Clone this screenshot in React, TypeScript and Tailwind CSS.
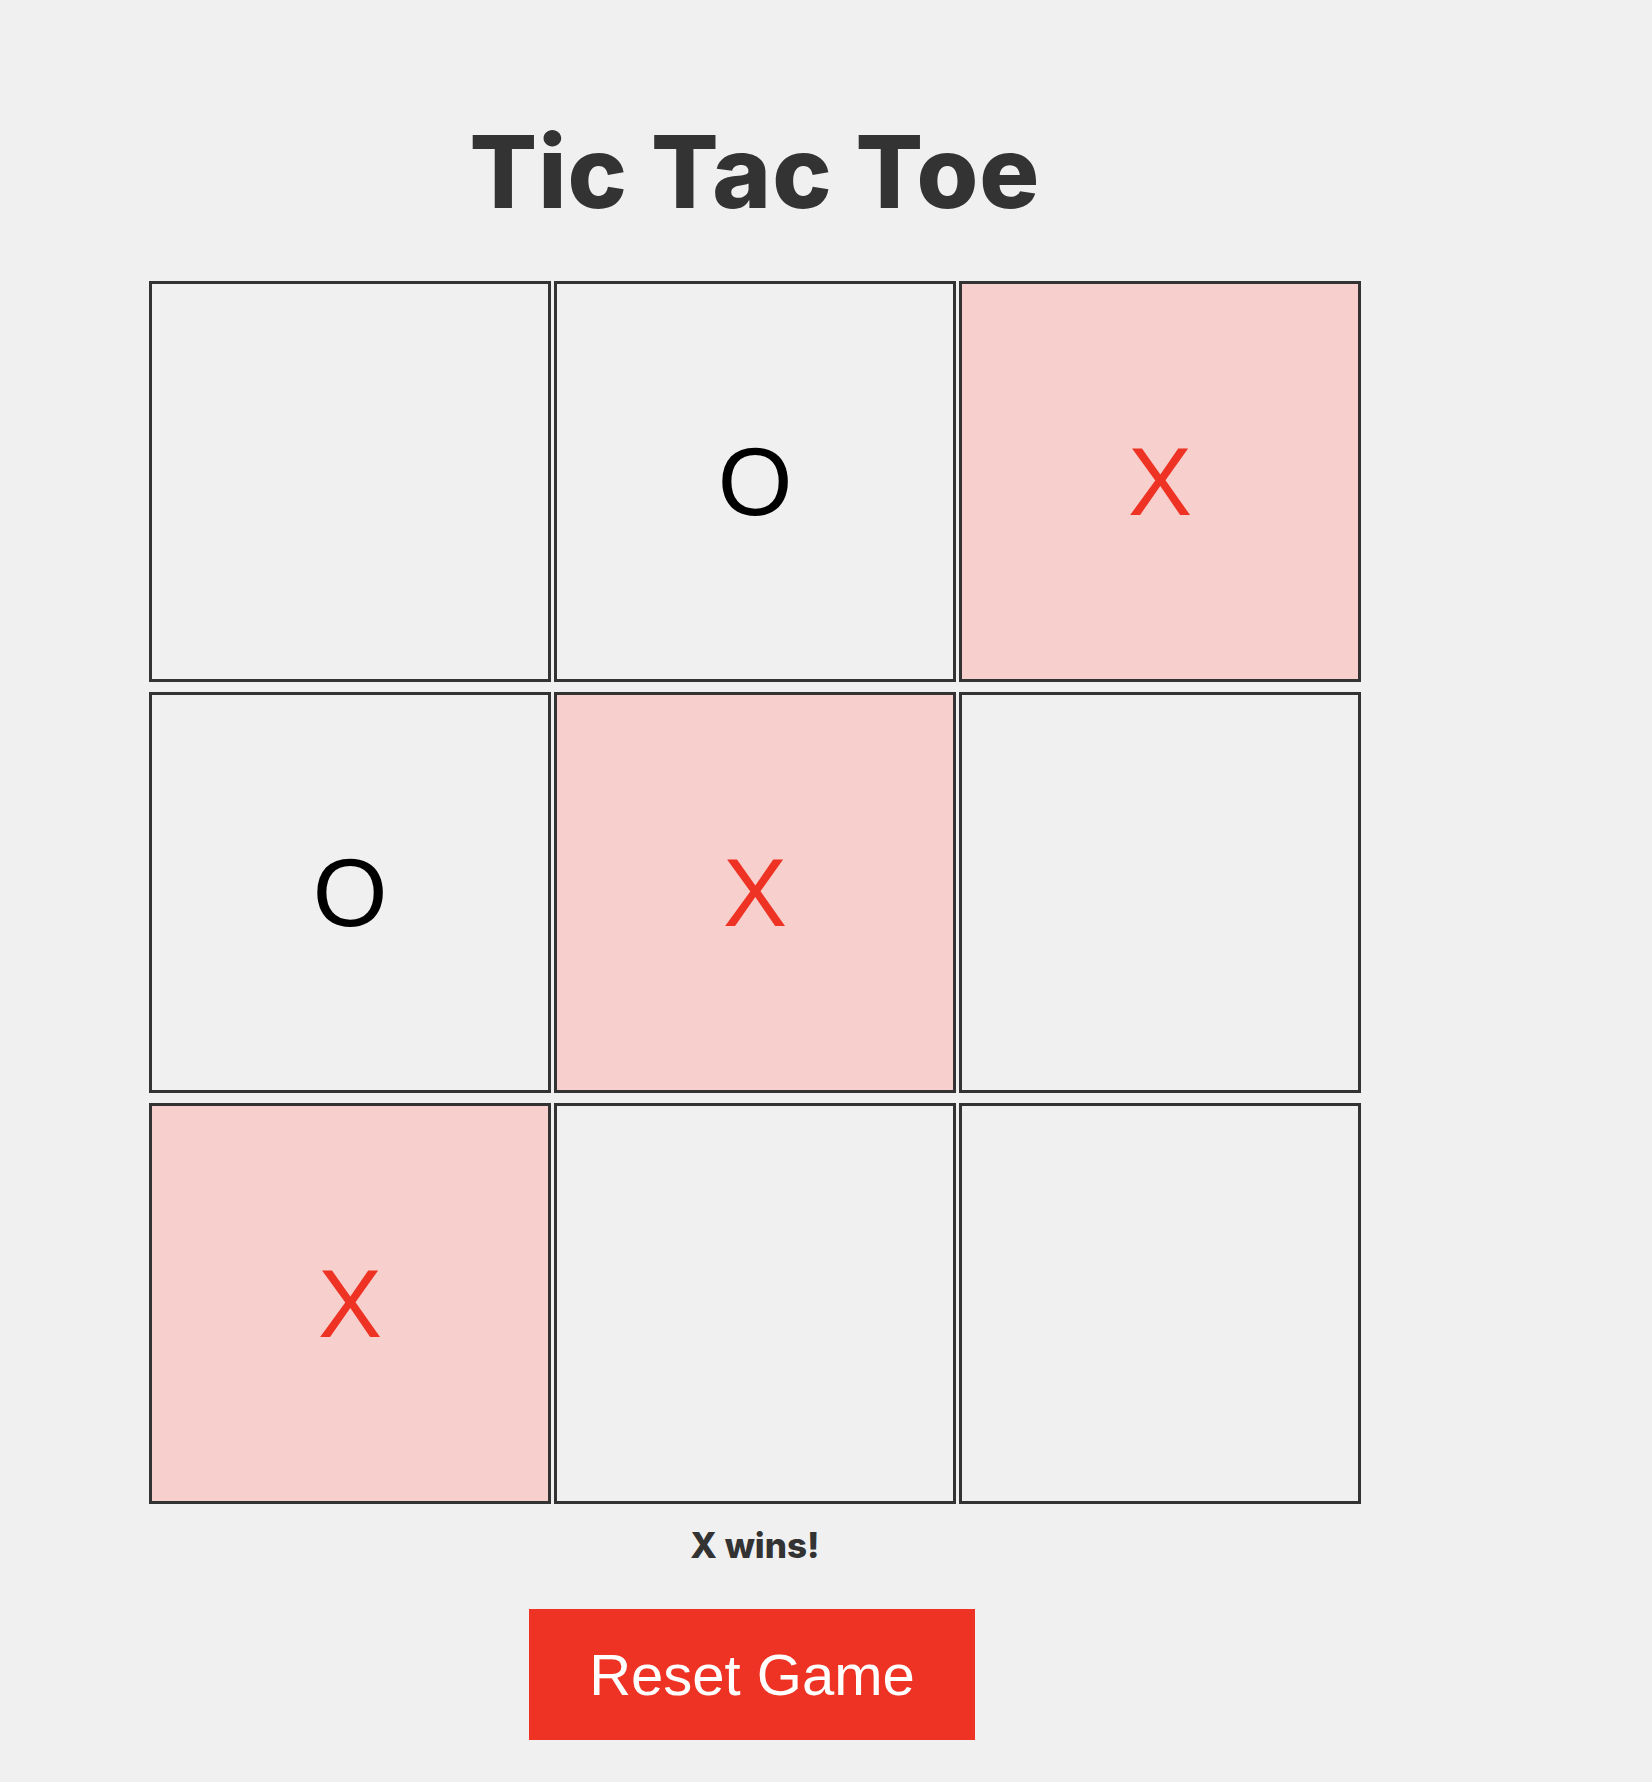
import { useState } from 'react'

type Mark = 'X' | 'O' | null

const initial: Mark[] = [null, 'O', 'X', 'O', 'X', null, 'X', null, null]
const winLine = [2, 4, 6]

export default function App() {
  const [board, setBoard] = useState<Mark[]>(initial)

  const rows = [0, 1, 2].map((r) => board.slice(r * 3, r * 3 + 3))

  return (
    <div className="min-h-screen bg-[#f0f0f0]">
      <div className="ml-[149px] w-[1212px] flex flex-col items-center pt-[122px]">
        <h1 className="font-['Inter',sans-serif] font-extrabold text-[100px] leading-none tracking-[1px] text-[#333]">
          Tic Tac Toe
        </h1>

        {/* Board */}
        <div className="mt-[59px] flex flex-col gap-[10px]">
          {rows.map((row, r) => (
            <div key={r} className="flex gap-[3px]">
              {row.map((cell, c) => {
                const idx = r * 3 + c
                const won = winLine.includes(idx) && board[idx] === 'X'
                return (
                  <button
                    key={c}
                    onClick={() => setBoard(initial)}
                    className={`w-[402px] h-[401px] border-[3px] border-[#333] flex items-center justify-center font-['Liberation_Sans',Arial,sans-serif] text-[96px] leading-none ${
                      won ? 'bg-[#f7cfcd]' : 'bg-[#f0f0f0]'
                    } ${cell === 'X' ? 'text-[#ee3325]' : 'text-black'}`}
                  >
                    {cell}
                  </button>
                )
              })}
            </div>
          ))}
        </div>

        <p className="mt-[24px] font-['Inter',sans-serif] font-extrabold text-[35px] leading-none text-[#333]">
          X wins!
        </p>

        <button
          onClick={() => setBoard(initial)}
          className="mt-[46px] mr-[6px] w-[446px] h-[131px] bg-[#ee3325] text-white font-['Liberation_Sans',Arial,sans-serif] text-[58px] leading-none"
        >
          Reset Game
        </button>
      </div>
    </div>
  )
}
